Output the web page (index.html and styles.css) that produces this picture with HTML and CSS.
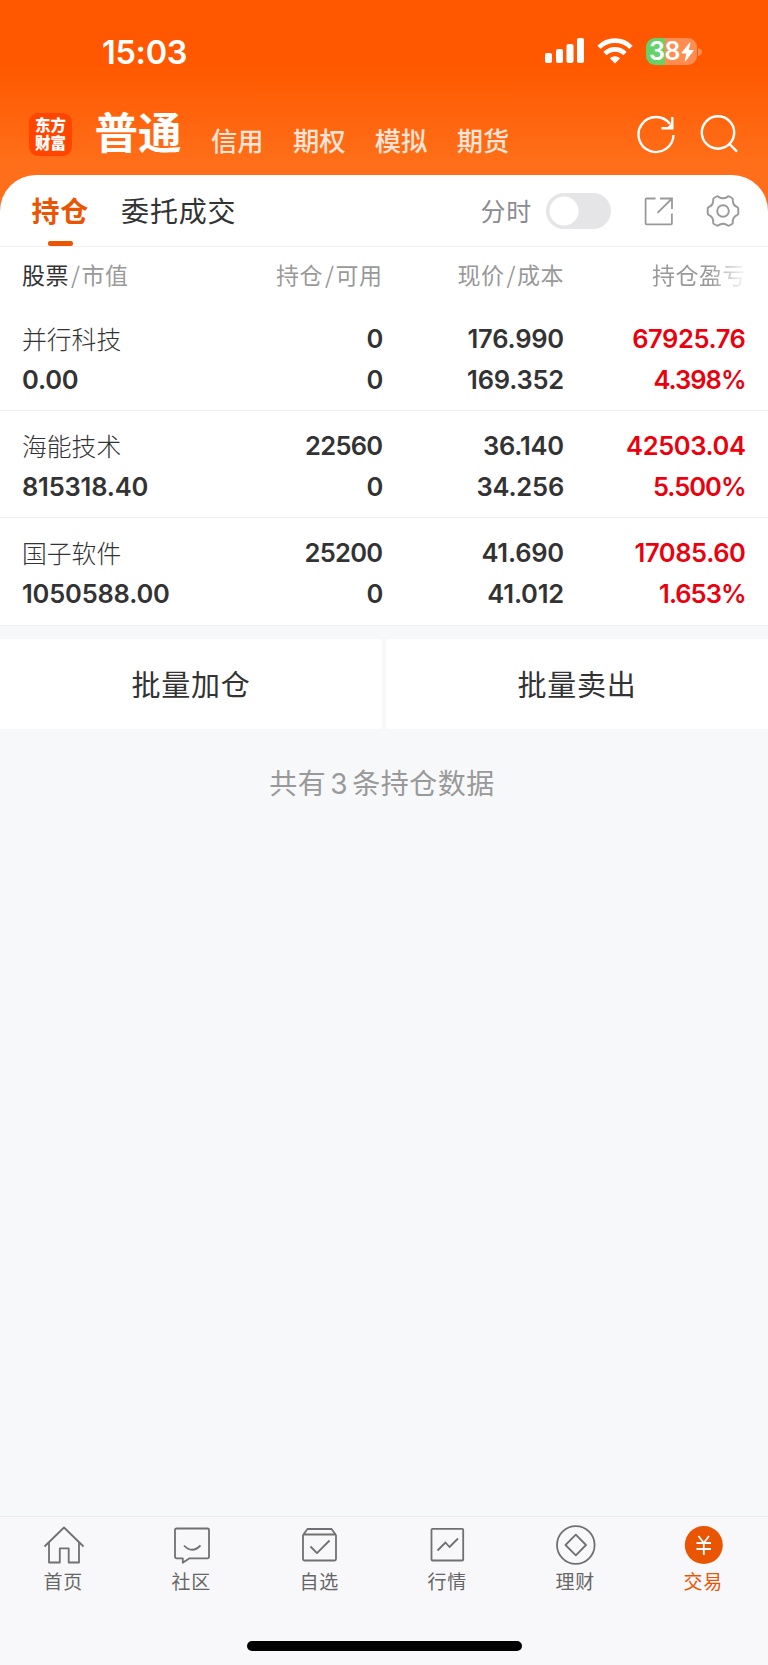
FILE: index.html
```html
<!DOCTYPE html>
<html lang="zh-CN">
<head>
<meta charset="utf-8">
<title>持仓</title>
<link rel="stylesheet" href="styles.css">
</head>
<body>
<div class="app">
  <header class="header">
    <div class="status">
      <span class="clock">15:03</span>
      <div class="status-icons">
        <svg class="signal" width="40" height="26" viewBox="0 0 40 26" fill="#fff"><rect x="1" y="15" width="7" height="10" rx="2"/><rect x="12" y="11" width="7" height="14" rx="2"/><rect x="22.500" y="6" width="7" height="19" rx="2"/><rect x="33" y="0" width="7" height="25" rx="2"/></svg>
        <svg class="wifi" width="36" height="26" viewBox="0 0 36 26" fill="none" stroke="#fff" stroke-width="4.600"><path d="M2 9.300a22.600 22.600 0 0 1 32 0"/><path d="M8 15.600a14 14 0 0 1 20 0"/><path d="M18 25.500l-5.200-5.300q5.200-3.800 10.400 0z" fill="#fff" stroke="none"/></svg>
        <div class="battery"><span class="battery-num">38</span><svg width="13" height="20" viewBox="0 0 13 20" fill="#fff" stroke="#fff" stroke-linejoin="round"><path d="M9 .8L.8 11H6L4.200 19.200 12.300 8.500H7.200z"/></svg></div>
        <svg class="cap" width="4" height="8" viewBox="0 0 4 8"><path d="M0 0q4 1 4 4t-4 4z" fill="#ff8c50"/></svg>
      </div>
    </div>
    <nav class="accounts">
      <div class="logo">东方<br>财富</div>
      <span class="account-main">普通</span>
      <span class="account">信用</span>
      <span class="account">期权</span>
      <span class="account">模拟</span>
      <span class="account">期货</span>
      <svg class="refresh" width="40" height="40" viewBox="0 0 40 40" fill="none" stroke="#fff" stroke-width="2.400"><path d="M37.500 21A17.500 17.500 0 1 1 34 10M36.300 3v11.300H25.500"/><path d="M30.500 14.300h5.800V8.500z" fill="#fff" stroke="none"/></svg>
      <svg class="search" width="40" height="40" viewBox="0 0 40 40" fill="none" stroke="#fff" stroke-width="2.400"><circle cx="19" cy="18.500" r="16.200"/><path d="M30 29.500l8 8.200"/></svg>
    </nav>
  </header>

  <main class="panel">
    <div class="tabs">
      <span class="tab tab-on">持仓</span>
      <span class="tab">委托成交</span>
      <span class="tools-label">分时</span>
      <span class="switch"></span>
      <svg class="share" width="30" height="30" viewBox="0 0 30 30" fill="none" stroke="#999" stroke-width="1.800"><path d="M11.500 2.500H2.500a.9.900 0 0 0-.9.900v24a.9.900 0 0 0 .9.900h24.500a.9.900 0 0 0 .9-.9V17.500M16 2.500h12V13M28 2.500L13.500 16.800"/></svg>
      <svg class="gear" width="34" height="34" viewBox="0 0 34 34" fill="none" stroke="#999" stroke-width="1.900" stroke-linejoin="round"><circle cx="17" cy="17" r="5.800"/><path d="M12.200 2.600Q17 6 21.800 2.600Q22.500 2.100 23.300 2.500L26 4Q26.900 4.500 26.800 5.500Q26.300 11 31.300 13.200Q32.300 13.700 32.300 14.700V19.300Q32.300 20.300 31.300 20.800Q26.300 23 26.800 28.500Q26.900 29.500 26 30L23.300 31.500Q22.500 31.900 21.800 31.400Q17 28 12.200 31.400Q11.500 31.900 10.700 31.500L8 30Q7.100 29.500 7.200 28.500Q7.700 23 2.700 20.800Q1.700 20.300 1.700 19.300V14.700Q1.700 13.700 2.700 13.200Q7.700 11 7.200 5.500Q7.100 4.500 8 4L10.700 2.500Q11.500 2.100 12.200 2.600Z"/></svg>
    </div>
    <div class="cols">
      <div><b>股票</b><i>/</i>市值</div>
      <div>持仓<i>/</i>可用</div>
      <div>现价<i>/</i>成本</div>
      <div class="fade">持仓盈亏</div>
    </div>
    <div class="row">
      <div><span class="name">并行科技</span><span>0.00</span></div>
      <div class="qty"><span>0</span><span>0</span></div>
      <div><span>176.990</span><span>169.352</span></div>
      <div class="up"><span>67925.76</span><span class="pct">4.398%</span></div>
    </div>
    <div class="row">
      <div><span class="name">海能技术</span><span>815318.40</span></div>
      <div class="qty"><span>22560</span><span>0</span></div>
      <div><span>36.140</span><span>34.256</span></div>
      <div class="up"><span>42503.04</span><span class="pct">5.500%</span></div>
    </div>
    <div class="row">
      <div><span class="name">国子软件</span><span>1050588.00</span></div>
      <div class="qty"><span>25200</span><span>0</span></div>
      <div><span>41.690</span><span>41.012</span></div>
      <div class="up"><span>17085.60</span><span class="pct">1.653%</span></div>
    </div>
  </main>

  <div class="actions"><span>批量加仓</span><span>批量卖出</span></div>
  <p class="summary">共有<span>3</span>条持仓数据</p>

  <footer class="bottom">
    <nav class="menu">
      <div class="item"><svg width="42" height="42" viewBox="0 0 42 42"><path d="M1.500 21.500L21 2.500l19.500 19M6 17.500v20h10.800V23.300h8.900v14.200H36v-20"/></svg><span>首页</span></div>
      <div class="item"><svg width="42" height="42" viewBox="0 0 42 42"><path d="M5.500 3.500h31a1.500 1.500 0 0 1 1.500 1.500v26.800a1.500 1.500 0 0 1-1.500 1.500H18.500l-6.700 4.500v-4.500H5.500A1.500 1.500 0 0 1 4 31.800V5a1.500 1.500 0 0 1 1.500-1.500zM13 20.500q8 8.500 16.500 0"/></svg><span>社区</span></div>
      <div class="item"><svg width="42" height="42" viewBox="0 0 42 42"><path d="M4 10v24a1.500 1.500 0 0 0 1.500 1.500h30a1.500 1.500 0 0 0 1.500-1.500V10M4 9.500h33M4 10l4.500-6h24L37 10M11.500 21.500l6.500 6.700 12.500-12.700"/></svg><span>自选</span></div>
      <div class="item"><svg width="42" height="42" viewBox="0 0 42 42"><rect x="4.500" y="3.800" width="31.700" height="31.700" rx="1"/><path d="M10.500 25.500l8-8 4 4.500 8.500-8.500"/></svg><span>行情</span></div>
      <div class="item"><svg width="42" height="42" viewBox="0 0 42 42"><circle cx="20.800" cy="20" r="18.800"/><path d="M20.800 9.700L31 20 20.800 30.300 10.500 20z"/></svg><span>理财</span></div>
      <div class="item item-on"><svg width="42" height="42" viewBox="0 0 42 42"><circle class="disc" cx="20.800" cy="20" r="19"/><path class="yen" d="M15.500 11l5.300 7 5.200-7M20.800 18v12M13.500 18h14.500M13.500 24h14.500"/></svg><span>交易</span></div>
    </nav>
    <div class="home-bar"></div>
  </footer>
</div>
</body>
</html>
```
FILE: styles.css
```css
* { box-sizing: border-box; }
body { margin: 0; }
.app {
  width: 768px;
  height: 1665px;
  display: flex;
  flex-direction: column;
  overflow: hidden;
  background: linear-gradient(#ff5800 65px, #ff6e18 160px, #ff6e18 215px, #f7f8fa 215px);
  font-family: Inter, "Noto Sans CJK SC", sans-serif;
  color: #333;
}
.header { height: 175px; flex: none; color: #fff; }
.status { height: 103px; display: flex; justify-content: space-between; padding: 0 67px 0 102px; }
.clock { font-size: 32.500px; font-weight: 600; line-height: 105px; letter-spacing: -.3px; }
.status-icons { display: flex; align-items: flex-start; padding-top: 38px; margin-right: -1px; }
.wifi { margin: 0 0 0 13px; }
.battery {
  width: 51px;
  height: 27px;
  margin-left: 13px;
  border-radius: 9px;
  display: flex;
  align-items: center;
  padding-left: 3px;
  background: linear-gradient(90deg, #65d268 19px, #ff8c50 19px);
}
.battery-num { font-size: 25px; line-height: 27px; font-weight: 600; width: 32px; letter-spacing: -0.3px; }
.cap { margin: 10px 0 0 1px; }
.accounts { display: flex; height: 72px; padding-left: 29px; font-family: "Noto Sans CJK SC", sans-serif; }
.logo {
  width: 43px;
  height: 43px;
  margin-top: 10px;
  border-radius: 9px;
  background: #ff4500;
  text-align: center;
  padding-top: 2px;
  font-size: 15.500px;
  font-weight: 900;
  line-height: 18px;
}
.account-main { margin: 0 29.500px 0 22.500px; font-size: 43.500px; font-weight: 700; line-height: 56px; }
.account { margin-right: 29.300px; font-size: 26.300px; font-weight: 500; line-height: 74px; color: #ffe5d8; }
.refresh { margin: 11px 0 0 97.500px; }
.search { margin: 11px 0 0 22.500px; }

.panel { flex: none; height: 451px; background: #fff; border-radius: 36px 36px 0 0; font-family: Inter, "Noto Sans CJK SC", sans-serif; }
.tabs { height: 72px; display: flex; align-items: center; padding-left: 31.500px; border-bottom: 1px solid #f0f0f2; }
.tab { font: 400 28px/70px "Noto Sans CJK SC", sans-serif; letter-spacing: .8px; height: 71px; }
.tab-on { position: relative; margin-right: 32px; font-weight: 700; color: #ea5504; }
.tab-on::after { content: ""; position: absolute; left: 16px; bottom: 0; width: 25px; height: 5px; border-radius: 2px; background: #ea5504; }
.tools-label { margin-left: auto; font: 400 25px/70px "Noto Sans CJK SC", sans-serif; color: #8b8b91; letter-spacing: .8px; height: 72px; }
.switch { width: 65px; height: 36px; margin-left: 14px; border-radius: 18px; background: radial-gradient(circle at 18px 18px, #fff 14px, #e5e5e8 15px); }
.share { margin-left: 33px; }
.gear { margin: 0 28px 0 32px; }
.cols, .row { display: grid; grid-template-columns: 182px 178.500px 181.500px 181.500px; padding-left: 22px; }
.cols { height: 57px; font: 400 23px/55px "Noto Sans CJK SC", sans-serif; letter-spacing: .5px; color: #999; }
.cols div + div, .row div + div { text-align: right; }
.cols b { font-weight: 400; color: #333; }
.cols i { font-style: normal; margin: 0 1px 0 2px; }
.cols .fade { -webkit-mask-image: linear-gradient(90deg, #000 145px, transparent 184px); mask-image: linear-gradient(90deg, #000 145px, transparent 184px); text-align: left; padding-left: 88px; white-space: nowrap; }
.row { height: 107.200px; padding-top: 15px; border-bottom: 1px solid #f0f0f2; font-size: 25.500px; font-weight: 600; line-height: 40.500px; letter-spacing: -.2px; }
.row span { display: block; height: 40.500px; }
.row .name { font: 300 24.800px/38.500px "Noto Sans CJK SC", sans-serif; letter-spacing: 0; }
.row .qty { letter-spacing: -.7px; }
.row .up { color: #eb000d; letter-spacing: -.4px; }
.row .pct { letter-spacing: -1px; }

.actions { flex: none; display: flex; gap: 4px; height: 90px; margin-top: 13px; font: 400 29px/89px "Noto Sans CJK SC", sans-serif; letter-spacing: .8px; text-align: center; }
.actions span { flex: 1; background: #fff; }
.summary { margin: 0; text-align: center; font: 400 28px/106px "Noto Sans CJK SC", sans-serif; letter-spacing: .5px; color: #999; padding-right: 4px; }
.summary span { margin: 0 4px; font-family: Inter, sans-serif; }
.bottom { margin-top: auto; height: 149px; flex: none; border-top: 1px solid #e9eaed; background: #f8f8fb; }
.menu { display: grid; grid-template-columns: repeat(6, 128px); height: 124px; padding-top: 8px; }
.item { display: flex; flex-direction: column; align-items: center; font: 400 19px/27px "Noto Sans CJK SC", sans-serif; letter-spacing: .7px; color: #666; }
.item svg { fill: none; stroke: #707070; stroke-width: 1.800; stroke-linejoin: round; }
.item span { margin: 0 1.500px 0 0; }
.item-on { color: #ea5504; }
.item .disc { fill: #ea5504; stroke: none; }
.item .yen { stroke: #fff; }
.home-bar { width: 275px; height: 10px; margin-left: 246.500px; border-radius: 5px; background: #000; }
```
